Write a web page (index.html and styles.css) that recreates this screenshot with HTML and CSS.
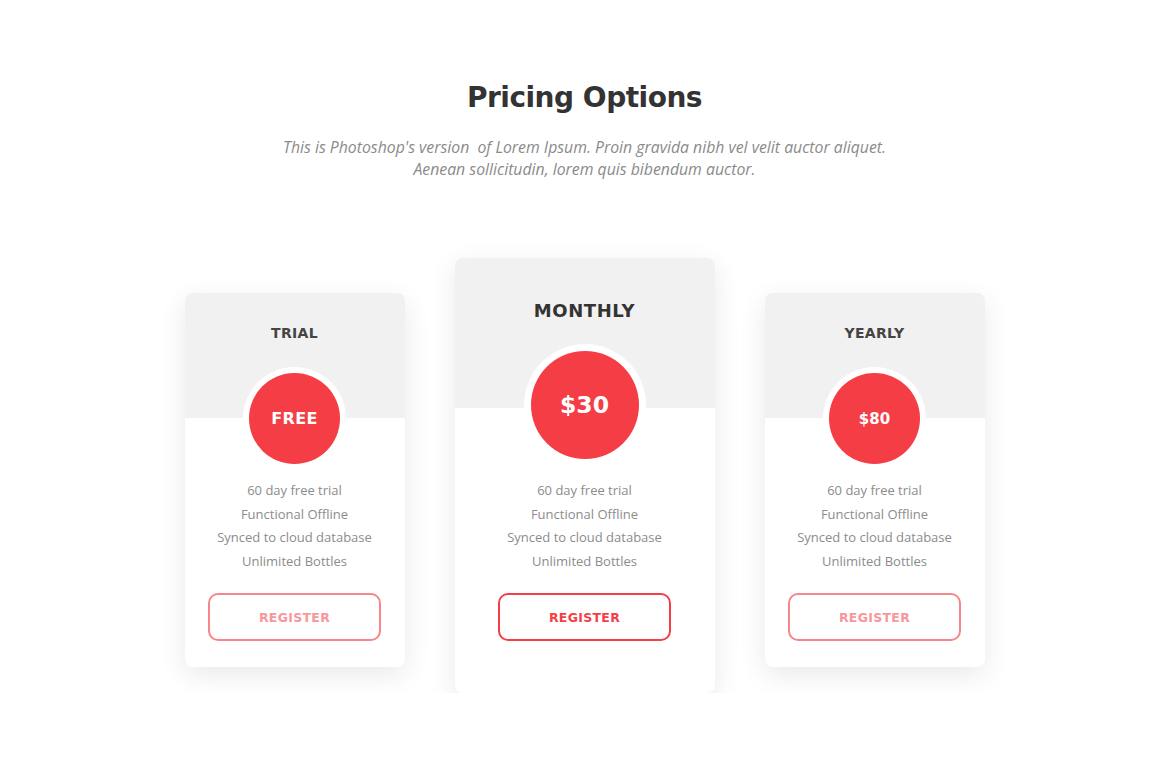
FILE: index.html
```html
<!DOCTYPE html>
<html lang="en">
<head>
<meta charset="utf-8">
<title>Pricing Options</title>
<link rel="stylesheet" href="styles.css">
</head>
<body>
<section class="pricing">
  <header class="intro">
    <h1 class="intro-title">Pricing Options</h1>
    <p class="intro-text">This is Photoshop's version&nbsp; of Lorem Ipsum. Proin gravida nibh vel velit auctor aliquet.<br>Aenean sollicitudin, lorem quis bibendum auctor.</p>
  </header>
  <div class="plans">
    <article class="plan plan-side">
      <div class="plan-head"><h2 class="plan-name">TRIAL</h2></div>
      <div class="plan-badge"><span class="plan-price price-free">FREE</span></div>
      <ul class="plan-features">
        <li>60 day free trial</li>
        <li>Functional Offline</li>
        <li>Synced to cloud database</li>
        <li>Unlimited Bottles</li>
      </ul>
      <a class="plan-btn" href="#">REGISTER</a>
    </article>
    <article class="plan plan-main">
      <div class="plan-head"><h2 class="plan-name">MONTHLY</h2></div>
      <div class="plan-badge"><span class="plan-price">$30</span></div>
      <ul class="plan-features">
        <li>60 day free trial</li>
        <li>Functional Offline</li>
        <li>Synced to cloud database</li>
        <li>Unlimited Bottles</li>
      </ul>
      <a class="plan-btn" href="#">REGISTER</a>
    </article>
    <article class="plan plan-side">
      <div class="plan-head"><h2 class="plan-name">YEARLY</h2></div>
      <div class="plan-badge"><span class="plan-price">$80</span></div>
      <ul class="plan-features">
        <li>60 day free trial</li>
        <li>Functional Offline</li>
        <li>Synced to cloud database</li>
        <li>Unlimited Bottles</li>
      </ul>
      <a class="plan-btn" href="#">REGISTER</a>
    </article>
  </div>
</section>
</body>
</html>
```

FILE: styles.css
```css
* { box-sizing: border-box; }
html, body { margin: 0; padding: 0; background: #ffffff; }
body { font-family: "Open Sans", "Liberation Sans", sans-serif; color: #333; }

.pricing { width: 1169px; padding-top: 78px; }

.intro { text-align: center; }
.intro-title {
  margin: 0;
  font-family: "DejaVu Sans", "Liberation Sans", sans-serif;
  font-weight: 700;
  font-size: 28px;
  line-height: 40px;
  color: #333333;
  letter-spacing: -0.5px;
}
.intro-text {
  margin: 18px 0 0;
  font-style: italic;
  font-size: 15.8px;
  line-height: 22px;
  color: #8a8a8a;
}

.plans {
  display: flex;
  justify-content: center;
  align-items: flex-start;
  gap: 50px;
  margin-top: 78px;
}

.plan {
  background: #ffffff;
  border-radius: 8px;
  box-shadow: 0 8px 28px rgba(0, 0, 0, 0.09);
  overflow: hidden;
  display: flex;
  flex-direction: column;
  align-items: center;
}
.plan-side { width: 220px; margin-top: 35px; padding-bottom: 26px; }
.plan-main { width: 260px; padding-bottom: 52px; }

.plan-head {
  width: 100%;
  background: #f1f1f1;
  text-align: center;
}
.plan-side .plan-head { height: 125px; padding-top: 30px; }
.plan-main .plan-head { height: 150px; padding-top: 40px; }

.plan-name {
  margin: 0;
  font-family: "DejaVu Sans", "Liberation Sans", sans-serif;
  font-weight: 700;
  color: #444444;
  letter-spacing: 0.3px;
}
.plan-side .plan-name { font-size: 14px; line-height: 20px; }
.plan-main .plan-name { font-size: 18px; line-height: 26px; color: #333333; letter-spacing: 0.6px; }

.plan-badge {
  border-radius: 50%;
  background: #ffffff;
  display: flex;
  align-items: center;
  justify-content: center;
}
.plan-side .plan-badge { width: 103px; height: 103px; margin-top: -51px; }
.plan-main .plan-badge { width: 122px; height: 122px; margin-top: -64px; }

.plan-price {
  border-radius: 50%;
  background: #f53d45;
  color: #ffffff;
  display: flex;
  align-items: center;
  justify-content: center;
  font-family: "DejaVu Sans", "Liberation Sans", sans-serif;
  font-weight: 700;
}
.plan-side .plan-price { width: 91px; height: 91px; font-size: 15px; }
.plan-side .price-free { font-size: 16px; letter-spacing: 0.3px; }
.plan-main .plan-price { width: 108px; height: 108px; font-size: 23.5px; }

.plan-features {
  list-style: none;
  margin: 0;
  padding: 0;
  text-align: center;
  font-size: 13px;
  line-height: 23.5px;
  color: #8c8c8c;
}
.plan-side .plan-features { margin-top: 9px; }
.plan-main .plan-features { margin-top: 13px; }

.plan-btn {
  margin-top: 20px;
  width: 173px;
  height: 48px;
  border: 2px solid #f7868b;
  border-radius: 10px;
  display: flex;
  align-items: center;
  justify-content: center;
  text-decoration: none;
  font-family: "DejaVu Sans", "Liberation Sans", sans-serif;
  font-weight: 700;
  font-size: 12.5px;
  letter-spacing: 0.3px;
  color: #f8979b;
}
.plan-main .plan-btn { border-color: #f43f47; color: #f43f47; }
```
